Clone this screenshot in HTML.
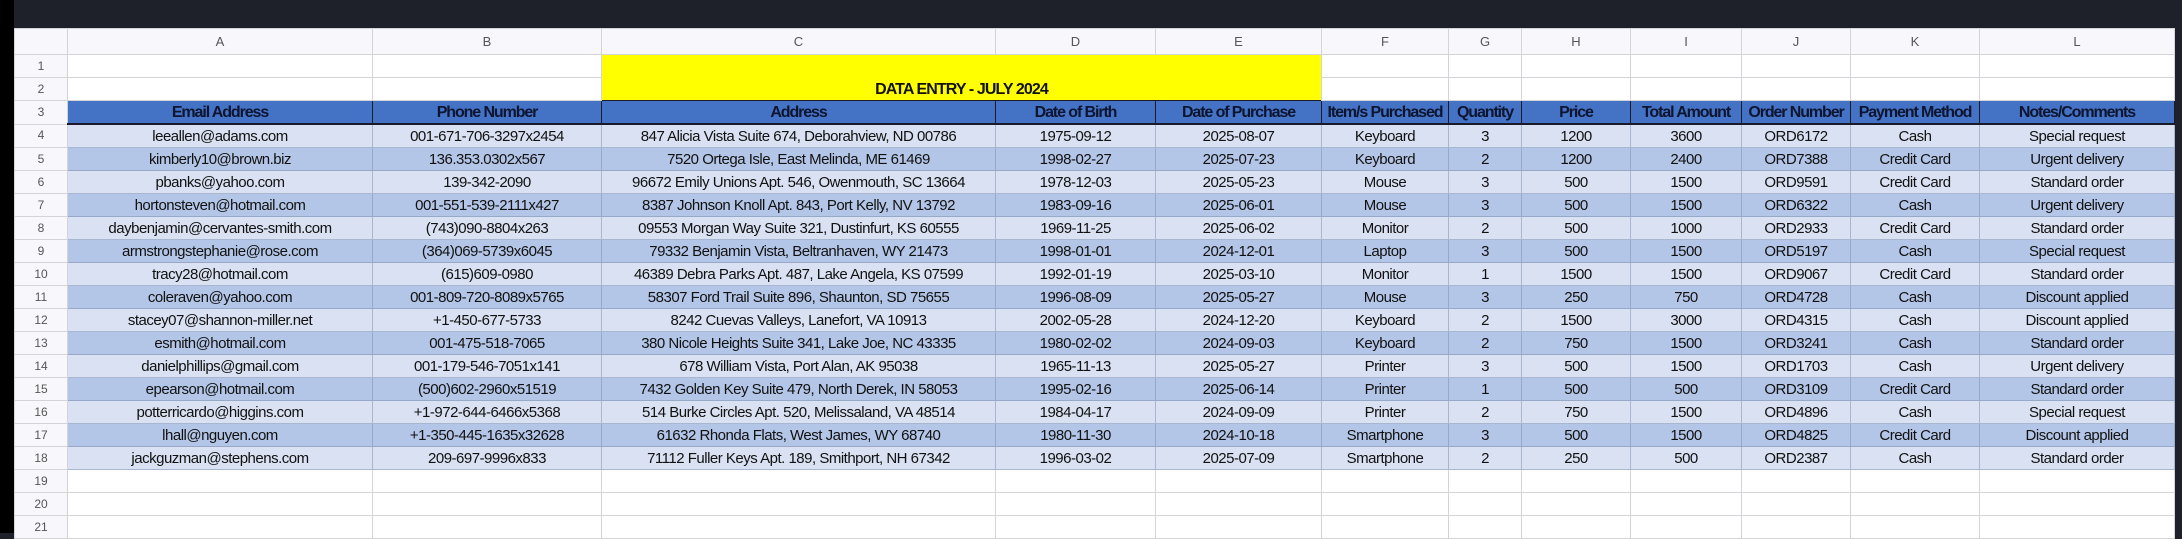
<!DOCTYPE html>
<html><head><meta charset="utf-8">
<style>
html,body{margin:0;padding:0;background:#1e202a;width:2182px;height:533px;overflow:hidden}
#blk{position:absolute;left:0;top:0;width:14px;height:533px;background:#000}
table{position:absolute;left:14px;top:28px;width:2160px;border-collapse:collapse;table-layout:fixed;font-family:"Liberation Sans",sans-serif;font-size:15px;letter-spacing:-0.5px;color:#111}
td{height:22px;padding:0;text-align:center;border:1px solid #d4d4d8;background:#fff;white-space:nowrap;overflow:hidden;line-height:21px}
tr.h td{height:25px;background:#f8f8fc;color:#555;font-size:13px;letter-spacing:0}
td.rn{background:#f8f8fc;color:#555;font-size:12px;letter-spacing:0}
tr.hd td{background:#4472c4;font-weight:bold;font-size:16px;border:1px solid #1a1a2a;border-bottom:2px solid #1a1a2a;color:#0d1530;letter-spacing:-1.1px}
tr.hd td.rn{background:#f8f8fc;border:1px solid #d4d4d8;font-weight:normal;font-size:12px;color:#555;letter-spacing:0}
tr.a td{background:#d9e1f2;border-color:#a9b6cf}
tr.b td{background:#b4c6e7;border-color:#97a8c8}
tr.a td.rn,tr.b td.rn{background:#f8f8fc;border-color:#d4d4d8}
td.y{background:#ffff00;font-weight:bold;font-size:16px;vertical-align:bottom;border:none;color:#111;letter-spacing:-0.9px}
</style></head><body>
<div id="blk"></div>
<table>
<colgroup><col style="width:53px"><col style="width:305px"><col style="width:229px"><col style="width:394px"><col style="width:160px"><col style="width:166px"><col style="width:127px"><col style="width:73px"><col style="width:109px"><col style="width:111px"><col style="width:109px"><col style="width:129px"><col style="width:195px"></colgroup>
<tr class="h"><td></td><td>A</td><td>B</td><td>C</td><td>D</td><td>E</td><td>F</td><td>G</td><td>H</td><td>I</td><td>J</td><td>K</td><td>L</td></tr>
<tr><td class="rn">1</td><td></td><td></td><td class="y" colspan="3" rowspan="2">DATA ENTRY - JULY 2024</td><td></td><td></td><td></td><td></td><td></td><td></td><td></td></tr>
<tr><td class="rn">2</td><td></td><td></td><td></td><td></td><td></td><td></td><td></td><td></td><td></td></tr>
<tr class="hd"><td class="rn">3</td><td>Email Address</td><td>Phone Number</td><td>Address</td><td>Date of Birth</td><td>Date of Purchase</td><td>Item/s Purchased</td><td>Quantity</td><td>Price</td><td>Total Amount</td><td>Order Number</td><td>Payment Method</td><td>Notes/Comments</td></tr>
<tr class="a"><td class="rn">4</td><td>leeallen@adams.com</td><td>001-671-706-3297x2454</td><td>847 Alicia Vista Suite 674, Deborahview, ND 00786</td><td>1975-09-12</td><td>2025-08-07</td><td>Keyboard</td><td>3</td><td>1200</td><td>3600</td><td>ORD6172</td><td>Cash</td><td>Special request</td></tr>
<tr class="b"><td class="rn">5</td><td>kimberly10@brown.biz</td><td>136.353.0302x567</td><td>7520 Ortega Isle, East Melinda, ME 61469</td><td>1998-02-27</td><td>2025-07-23</td><td>Keyboard</td><td>2</td><td>1200</td><td>2400</td><td>ORD7388</td><td>Credit Card</td><td>Urgent delivery</td></tr>
<tr class="a"><td class="rn">6</td><td>pbanks@yahoo.com</td><td>139-342-2090</td><td>96672 Emily Unions Apt. 546, Owenmouth, SC 13664</td><td>1978-12-03</td><td>2025-05-23</td><td>Mouse</td><td>3</td><td>500</td><td>1500</td><td>ORD9591</td><td>Credit Card</td><td>Standard order</td></tr>
<tr class="b"><td class="rn">7</td><td>hortonsteven@hotmail.com</td><td>001-551-539-2111x427</td><td>8387 Johnson Knoll Apt. 843, Port Kelly, NV 13792</td><td>1983-09-16</td><td>2025-06-01</td><td>Mouse</td><td>3</td><td>500</td><td>1500</td><td>ORD6322</td><td>Cash</td><td>Urgent delivery</td></tr>
<tr class="a"><td class="rn">8</td><td>daybenjamin@cervantes-smith.com</td><td>(743)090-8804x263</td><td>09553 Morgan Way Suite 321, Dustinfurt, KS 60555</td><td>1969-11-25</td><td>2025-06-02</td><td>Monitor</td><td>2</td><td>500</td><td>1000</td><td>ORD2933</td><td>Credit Card</td><td>Standard order</td></tr>
<tr class="b"><td class="rn">9</td><td>armstrongstephanie@rose.com</td><td>(364)069-5739x6045</td><td>79332 Benjamin Vista, Beltranhaven, WY 21473</td><td>1998-01-01</td><td>2024-12-01</td><td>Laptop</td><td>3</td><td>500</td><td>1500</td><td>ORD5197</td><td>Cash</td><td>Special request</td></tr>
<tr class="a"><td class="rn">10</td><td>tracy28@hotmail.com</td><td>(615)609-0980</td><td>46389 Debra Parks Apt. 487, Lake Angela, KS 07599</td><td>1992-01-19</td><td>2025-03-10</td><td>Monitor</td><td>1</td><td>1500</td><td>1500</td><td>ORD9067</td><td>Credit Card</td><td>Standard order</td></tr>
<tr class="b"><td class="rn">11</td><td>coleraven@yahoo.com</td><td>001-809-720-8089x5765</td><td>58307 Ford Trail Suite 896, Shaunton, SD 75655</td><td>1996-08-09</td><td>2025-05-27</td><td>Mouse</td><td>3</td><td>250</td><td>750</td><td>ORD4728</td><td>Cash</td><td>Discount applied</td></tr>
<tr class="a"><td class="rn">12</td><td>stacey07@shannon-miller.net</td><td>+1-450-677-5733</td><td>8242 Cuevas Valleys, Lanefort, VA 10913</td><td>2002-05-28</td><td>2024-12-20</td><td>Keyboard</td><td>2</td><td>1500</td><td>3000</td><td>ORD4315</td><td>Cash</td><td>Discount applied</td></tr>
<tr class="b"><td class="rn">13</td><td>esmith@hotmail.com</td><td>001-475-518-7065</td><td>380 Nicole Heights Suite 341, Lake Joe, NC 43335</td><td>1980-02-02</td><td>2024-09-03</td><td>Keyboard</td><td>2</td><td>750</td><td>1500</td><td>ORD3241</td><td>Cash</td><td>Standard order</td></tr>
<tr class="a"><td class="rn">14</td><td>danielphillips@gmail.com</td><td>001-179-546-7051x141</td><td>678 William Vista, Port Alan, AK 95038</td><td>1965-11-13</td><td>2025-05-27</td><td>Printer</td><td>3</td><td>500</td><td>1500</td><td>ORD1703</td><td>Cash</td><td>Urgent delivery</td></tr>
<tr class="b"><td class="rn">15</td><td>epearson@hotmail.com</td><td>(500)602-2960x51519</td><td>7432 Golden Key Suite 479, North Derek, IN 58053</td><td>1995-02-16</td><td>2025-06-14</td><td>Printer</td><td>1</td><td>500</td><td>500</td><td>ORD3109</td><td>Credit Card</td><td>Standard order</td></tr>
<tr class="a"><td class="rn">16</td><td>potterricardo@higgins.com</td><td>+1-972-644-6466x5368</td><td>514 Burke Circles Apt. 520, Melissaland, VA 48514</td><td>1984-04-17</td><td>2024-09-09</td><td>Printer</td><td>2</td><td>750</td><td>1500</td><td>ORD4896</td><td>Cash</td><td>Special request</td></tr>
<tr class="b"><td class="rn">17</td><td>lhall@nguyen.com</td><td>+1-350-445-1635x32628</td><td>61632 Rhonda Flats, West James, WY 68740</td><td>1980-11-30</td><td>2024-10-18</td><td>Smartphone</td><td>3</td><td>500</td><td>1500</td><td>ORD4825</td><td>Credit Card</td><td>Discount applied</td></tr>
<tr class="a"><td class="rn">18</td><td>jackguzman@stephens.com</td><td>209-697-9996x833</td><td>71112 Fuller Keys Apt. 189, Smithport, NH 67342</td><td>1996-03-02</td><td>2025-07-09</td><td>Smartphone</td><td>2</td><td>250</td><td>500</td><td>ORD2387</td><td>Cash</td><td>Standard order</td></tr>
<tr><td class="rn">19</td><td></td><td></td><td></td><td></td><td></td><td></td><td></td><td></td><td></td><td></td><td></td><td></td></tr>
<tr><td class="rn">20</td><td></td><td></td><td></td><td></td><td></td><td></td><td></td><td></td><td></td><td></td><td></td><td></td></tr>
<tr><td class="rn">21</td><td></td><td></td><td></td><td></td><td></td><td></td><td></td><td></td><td></td><td></td><td></td><td></td></tr>
</table>
</body></html>
